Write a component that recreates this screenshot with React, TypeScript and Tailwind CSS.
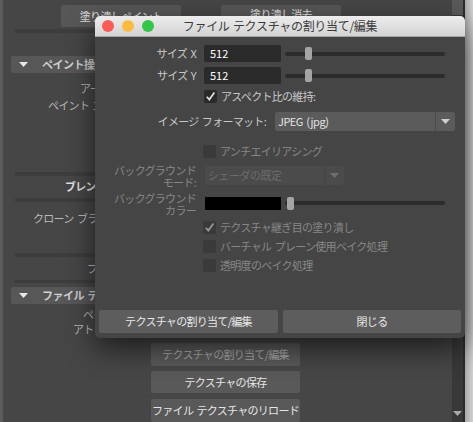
import React from "react";

const font = "font-['Noto_Sans_CJK_JP','Noto_Sans',sans-serif]";

function Check({ checked, disabled }: { checked?: boolean; disabled?: boolean }) {
  return (
    <span
      className={`flex h-[13px] w-[13px] shrink-0 items-center justify-center rounded-[2px] ${
        disabled ? "bg-[#3a3a3a]" : "bg-[#2a2a2a]"
      }`}
    >
      {checked && (
        <svg width="11" height="11" viewBox="0 0 11 11">
          <path
            d="M1.8 5.8 L4.3 8.6 L9.4 1.6"
            fill="none"
            stroke={disabled ? "#9a9a9a" : "#e2e2e2"}
            strokeWidth="1.7"
          />
        </svg>
      )}
    </span>
  );
}

function Slider({ at }: { at: number }) {
  return (
    <div className="relative ml-[4px] flex h-[13px] w-[160px] items-center">
      <div className="h-[4px] w-full rounded-full bg-[#2c2c2c]" />
      <div
        className="absolute top-0 h-[13px] w-[7px] rounded-[2px] bg-[#a4a4a4]"
        style={{ left: at }}
      />
    </div>
  );
}

function Arrow({ color }: { color: string }) {
  return (
    <svg width="9" height="5" viewBox="0 0 9 5">
      <path d="M0 0 H9 L4.5 5 Z" fill={color} />
    </svg>
  );
}

function Dropdown({ text, disabled, w }: { text: string; disabled?: boolean; w: string }) {
  return (
    <div
      className={`flex h-[19px] items-center rounded-[2px] ${w} ${
        disabled ? "bg-[#4b4b4b] text-[#6c6c6c]" : "bg-[#5b5b5b] text-[#e4e4e4]"
      }`}
    >
      <span className="flex-1 pl-[3px] tracking-[-0.5px]">{text}</span>
      <span
        className={`flex h-full w-[20px] items-center justify-center border-l ${
          disabled ? "border-[#444]" : "border-[#4a4a4a]"
        }`}
      >
        <Arrow color={disabled ? "#6e6e6e" : "#cfcfcf"} />
      </span>
    </div>
  );
}

// panel labels are cut by the dialog, so clip them at its left edge
function Label({ children, pl, bright }: { children: string; pl: string; bright?: boolean }) {
  return (
    <div
      className={`flex h-[17px] w-[92px] items-center overflow-hidden whitespace-nowrap ${pl} ${
        bright ? "font-bold text-[#dedede]" : "text-[#b9b9b9]"
      }`}
    >
      {children}
    </div>
  );
}

function Strip({ h = "h-[4px]" }: { h?: string }) {
  return <div className={`ml-[12px] mr-[2px] ${h} bg-[#3d3d3d]`} />;
}

function Header({ title }: { title: string }) {
  return (
    <div className="ml-[8px] mr-[2px] flex h-[17px] items-center rounded-[2px] bg-[#575757] pl-[8px]">
      <Arrow color="#e8e8e8" />
      <span className="ml-[14px] w-[70px] overflow-hidden whitespace-nowrap font-bold tracking-[-0.5px] text-[#cfcfcf]">
        {title}
      </span>
    </div>
  );
}

function PanelButton({ children, ml, dim, h = "h-[23px]" }: { children: string; ml: string; dim?: boolean; h?: string }) {
  return (
    <div
      className={`flex ${h} w-[149px] items-center justify-center rounded-[2px] bg-[#595959] ${ml} ${
        dim ? "text-[#a9a9a9]" : "text-[#e6e6e6]"
      }`}
    >
      {children}
    </div>
  );
}

function TwoLine({ a, b }: { a: string; b: string }) {
  return (
    <div className="w-[101px] text-right text-[#878787]">
      <div className="h-[12px] leading-[12px]">{a}</div>
      <div className="h-[12px] leading-[12px]">{b}</div>
    </div>
  );
}

export default function App() {
  return (
    <div
      className={`relative flex h-[422px] w-[473px] overflow-hidden bg-[#464646] text-[11px] tracking-[-0.7px] [word-spacing:1.5px] ${font}`}
    >
      <div className="w-[3px] bg-[#5c5c5c]" />

      {/* tool settings panel behind the dialog */}
      <div className="flex w-[449px] flex-col">
        <div className="h-[5px]" />
        <div className="flex h-[22px]">
          <div className="ml-[58px] flex w-[120px] items-center justify-center rounded-[2px] bg-[#575757] text-[#e0e0e0]">
            塗り潰しペイント
          </div>
          <div className="ml-[40px] flex h-[11px] w-[120px] items-start justify-center overflow-hidden rounded-t-[2px] bg-[#575757] pt-[2px] leading-[14px] text-[#e0e0e0]">
            塗り潰し消去
          </div>
        </div>
        <div className="h-[2px]" />
        <Strip />
        <div className="h-[23px]" />
        <Header title="ペイント操作" />
        <div className="h-[7px]" />
        <Label pl="pl-[77px]">アーティザン</Label>
        <Label pl="pl-[45px]">ペイント エフェクト</Label>
        <div className="h-[58px]" />
        <Strip />
        <div className="h-[2px]" />
        <Label pl="pl-[62px]" bright>ブレンド モード</Label>
        <div className="h-[3px]" />
        <Strip />
        <div className="h-[8px]" />
        <Label pl="pl-[30px]">クローン ブラシ モード</Label>
        <div className="h-[26px]" />
        <Strip />
        <div className="h-[3px]" />
        <Label pl="pl-[84px]">プレビュー</Label>
        <div className="h-[3px]" />
        <Strip h="h-[3px]" />
        <div className="h-[4px]" />
        <Header title="ファイル テクスチャ" />
        <div className="h-[3px]" />
        <div className="flex h-[15px] w-[92px] items-center overflow-hidden whitespace-nowrap pl-[80px] text-[#b9b9b9]">ペイント</div>
        <div className="flex h-[14px] w-[92px] items-center overflow-hidden whitespace-nowrap pl-[70px] text-[#b9b9b9]">アトリビュート</div>
        <div className="h-[7px]" />
        <PanelButton ml="ml-[148px]" dim>テクスチャの割り当て/編集</PanelButton>
        <div className="h-[5px]" />
        <PanelButton ml="ml-[148px]" h="h-[22px]">テクスチャの保存</PanelButton>
        <div className="h-[6px]" />
        <PanelButton ml="ml-[148px]">ファイル テクスチャのリロード</PanelButton>
      </div>

      {/* scrollbar */}
      <div className="flex w-[11px] flex-col justify-between bg-[#383838]">
        <div className="h-[15px] bg-[#5a5a5a]" />
        <div className="mb-[6px] flex justify-center">
          <Arrow color="#a8a8a8" />
        </div>
      </div>
      <div className="w-[2px] bg-[#2b2b2b]" />
      <div className="flex-1 bg-gradient-to-r from-[#a9a9a9] to-[#d2d2d2]" />

      {/* dialog */}
      <div className="absolute left-[95px] top-[16px] flex h-[322px] w-[370px] flex-col overflow-hidden rounded-[5px] bg-[#454545] shadow-[0_10px_28px_rgba(0,0,0,0.6)]">
        <div className="grid h-[21px] grid-cols-[60px_1fr_60px] items-center border-b border-[#a3a3a3] bg-gradient-to-b from-[#ededed] to-[#d3d3d3]">
          <div className="flex gap-[8px] pl-[7px]">
            <span className="h-[12px] w-[12px] rounded-full bg-[#fc5b57]" />
            <span className="h-[12px] w-[12px] rounded-full bg-[#fdbb40]" />
            <span className="h-[12px] w-[12px] rounded-full bg-[#33c748]" />
          </div>
          <div className="whitespace-nowrap text-center text-[12px] tracking-[-0.3px] [word-spacing:1px] text-[#3b3b3b]">
            ファイル テクスチャの割り当て/編集
          </div>
          <div />
        </div>

        <div className="flex flex-1 flex-col pt-[8px] text-[#c9c9c9]">
          <div className="flex h-[17px] items-center">
            <div className="w-[101px] text-right">サイズ X</div>
            <div className="ml-[8px] flex h-[17px] w-[77px] items-center rounded-[2px] bg-[#2a2a2a] pl-[6px] tracking-normal text-white">
              512
            </div>
            <Slider at={20} />
          </div>
          <div className="mt-[5px] flex h-[17px] items-center">
            <div className="w-[101px] text-right">サイズ Y</div>
            <div className="ml-[8px] flex h-[17px] w-[77px] items-center rounded-[2px] bg-[#2a2a2a] pl-[6px] tracking-normal text-white">
              512
            </div>
            <Slider at={20} />
          </div>
          <div className="mt-[6px] flex h-[13px] items-center pl-[109px]">
            <Check checked />
            <span className="ml-[4px]">アスペクト比の維持:</span>
          </div>
          <div className="mt-[9px] flex h-[19px] items-center">
            <div className="w-[171px] text-right">イメージ フォーマット:</div>
            <div className="ml-[9px]">
              <Dropdown text="JPEG (jpg)" w="w-[180px]" />
            </div>
          </div>
          <div className="mt-[14px] flex h-[13px] items-center pl-[108px] text-[#878787]">
            <Check disabled />
            <span className="ml-[4px]">アンチエイリアシング</span>
          </div>
          <div className="mt-[6px] flex h-[24px] items-start">
            <TwoLine a="バックグラウンド" b="モード:" />
            <div className="ml-[9px] mt-[2px]">
              <Dropdown text="シェーダの既定" w="w-[139px]" disabled />
            </div>
          </div>
          <div className="mt-[4px] flex h-[24px] items-start">
            <TwoLine a="バックグラウンド" b="カラー" />
            <div className="ml-[9px] mt-[5px] flex items-center">
              <div className="h-[13px] w-[76px] bg-black" />
              <div className="-mt-[1px]">
                <Slider at={2} />
              </div>
            </div>
          </div>
          <div className="mt-[5px] flex h-[13px] items-center pl-[108px] text-[#878787]">
            <Check checked disabled />
            <span className="ml-[4px]">テクスチャ継ぎ目の塗り潰し</span>
          </div>
          <div className="mt-[6px] flex h-[13px] items-center pl-[108px] text-[#878787]">
            <Check disabled />
            <span className="ml-[4px]">バーチャル プレーン使用ベイク処理</span>
          </div>
          <div className="mt-[6px] flex h-[13px] items-center pl-[108px] text-[#878787]">
            <Check disabled />
            <span className="ml-[4px]">透明度のベイク処理</span>
          </div>
          <div className="flex-1" />
          <div className="flex gap-[5px] px-[4px] pb-[5px]">
            <div className="flex h-[23px] w-[179px] items-center justify-center rounded-[2px] bg-[#5d5d5d] text-[#e8e8e8]">
              テクスチャの割り当て/編集
            </div>
            <div className="flex h-[23px] flex-1 items-center justify-center rounded-[2px] bg-[#5d5d5d] text-[#e8e8e8]">
              閉じる
            </div>
          </div>
        </div>
      </div>
    </div>
  );
}
